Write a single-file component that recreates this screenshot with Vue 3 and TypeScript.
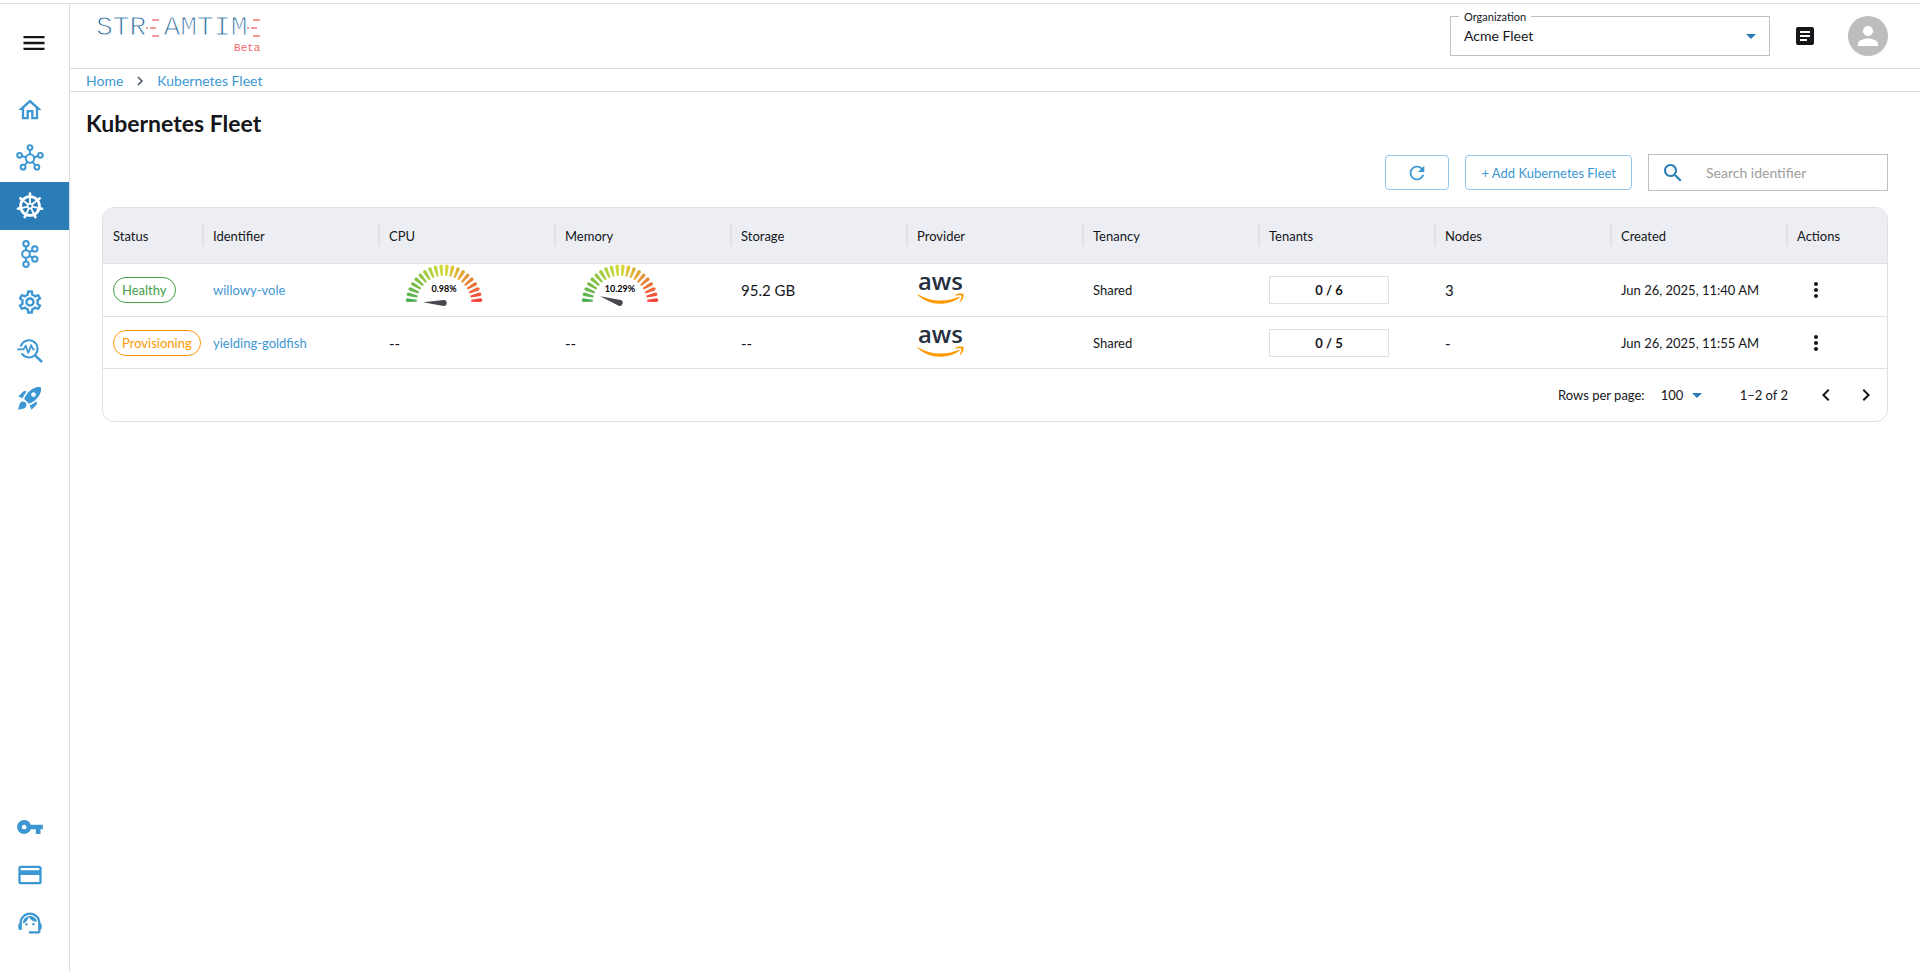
<script setup lang="ts">
import { ref, computed } from 'vue'

interface Fleet {
  status: 'Healthy' | 'Provisioning'
  identifier: string
  cpu: number | null
  memory: number | null
  storage: string
  tenancy: string
  tenants: string
  nodes: string
  created: string
}

const columns = ['Status', 'Identifier', 'CPU', 'Memory', 'Storage', 'Provider', 'Tenancy', 'Tenants', 'Nodes', 'Created', 'Actions']

const fleets: Fleet[] = [
  { status: 'Healthy', identifier: 'willowy-vole', cpu: 0.98, memory: 10.29, storage: '95.2 GB', tenancy: 'Shared', tenants: '0 / 6', nodes: '3', created: 'Jun 26, 2025, 11:40 AM' },
  { status: 'Provisioning', identifier: 'yielding-goldfish', cpu: null, memory: null, storage: '--', tenancy: 'Shared', tenants: '0 / 5', nodes: '-', created: 'Jun 26, 2025, 11:55 AM' },
]

const search = ref('')
const rows = computed(() => fleets.filter(f => f.identifier.includes(search.value.trim())))

const organization = ref('Acme Fleet')
const pageSize = ref('100')

const stops = [[76, 175, 80], [214, 220, 60], [244, 67, 54]]

function mix(t: number): string {
  const i = t < 0.5 ? 0 : 1
  const k = t * 2 - i
  return `rgb(${stops[i].map((c, n) => Math.round(c + (stops[i + 1][n] - c) * k)).join(',')})`
}

const levels = 20
const ticks = Array.from({ length: levels }, (_, i) => ({
  color: mix(i / (levels - 1)),
  turn: `rotate(${(i + 0.5) * (180 / levels)} 55 39)`,
}))

const needle = (value: number) => `rotate(${value * 1.8} 55 39)`

const spokes = Array.from({ length: 7 }, (_, i) => `rotate(${(i * 360) / 7} 14 14)`)
</script>

<template>
  <div class="shell">
    <nav class="sidebar" aria-label="Main">
      <button class="menu" type="button" aria-label="Toggle menu">
        <svg viewBox="0 0 24 24"><path d="M3 18h18v-2H3v2zm0-5h18v-2H3v2zm0-7v2h18V6H3z" /></svg>
      </button>
      <div class="group">
        <a href="#home" aria-label="Home">
          <svg viewBox="0 0 24 24"><path d="M12 5.69l5 4.5V18h-2v-6H9v6H7v-7.81l5-4.5M12 3L2 12h3v8h6v-6h2v6h6v-8h3L12 3z" /></svg>
        </a>
        <a href="#clusters" aria-label="Clusters">
          <svg viewBox="0 0 28 28" class="line">
            <circle cx="14" cy="14.5" r="4.2" />
            <circle cx="14" cy="3.6" r="2.4" /><circle cx="3.6" cy="11.3" r="2.4" /><circle cx="24.4" cy="11.3" r="2.4" />
            <circle cx="7.1" cy="23.2" r="2.4" /><circle cx="20.9" cy="23.2" r="2.4" />
            <path d="M14 6v4.3M5.9 12l4 1.3M22.1 12l-4 1.3M8.6 21.3l2.8-3.5M19.4 21.3l-2.8-3.5" />
          </svg>
        </a>
        <a href="#kubernetes" class="active" aria-label="Kubernetes Fleet" aria-current="page">
          <svg viewBox="0 0 28 28" class="line">
            <circle cx="14" cy="14" r="9.4" stroke-width="2.8" />
            <circle cx="14" cy="14" r="2.4" stroke-width="1.6" />
            <g v-for="s in spokes" :key="s" :transform="s">
              <path d="M14 11.6V1.6" stroke-width="1.8" /><path d="M14 3V1.6" stroke-width="2.6" stroke-linecap="round" />
            </g>
          </svg>
        </a>
        <a href="#kafka" aria-label="Kafka">
          <svg viewBox="0 0 28 28" class="line">
            <circle cx="10" cy="14" r="3.8" />
            <circle cx="10" cy="3.7" r="2.7" /><circle cx="10" cy="24.3" r="2.7" />
            <circle cx="18.8" cy="8.9" r="2.7" /><circle cx="18.8" cy="19.1" r="2.7" />
            <path d="M10 6.4v3.8M10 17.8v3.8M13.3 12.1l3.1-1.8M13.3 15.9l3.1 1.8" />
          </svg>
        </a>
        <a href="#settings" aria-label="Settings">
          <svg viewBox="0 0 24 24"><path d="M19.43 12.98c.04-.32.07-.64.07-.98 0-.34-.03-.66-.07-.98l2.11-1.65c.19-.15.24-.42.12-.64l-2-3.46c-.09-.16-.26-.25-.44-.25-.06 0-.12.01-.17.03l-2.49 1c-.52-.4-1.08-.73-1.69-.98l-.38-2.65C14.46 2.18 14.25 2 14 2h-4c-.25 0-.46.18-.49.42l-.38 2.65c-.61.25-1.17.59-1.69.98l-2.49-1c-.06-.02-.12-.03-.18-.03-.17 0-.34.09-.43.25l-2 3.46c-.13.22-.07.49.12.64l2.11 1.65c-.04.32-.07.65-.07.98 0 .33.03.66.07.98l-2.11 1.65c-.19.15-.24.42-.12.64l2 3.46c.09.16.26.25.44.25.06 0 .12-.01.17-.03l2.49-1c.52.4 1.08.73 1.69.98l.38 2.65c.03.24.24.42.49.42h4c.25 0 .46-.18.49-.42l.38-2.65c.61-.25 1.17-.59 1.69-.98l2.49 1c.06.02.12.03.18.03.17 0 .34-.09.43-.25l2-3.46c.12-.22.07-.49-.12-.64l-2.11-1.65zm-1.98-1.71c.04.31.05.52.05.73 0 .21-.02.43-.05.73l-.14 1.13.89.7 1.08.84-.7 1.21-1.27-.51-1.04-.42-.9.68c-.43.32-.84.56-1.25.73l-1.06.43-.16 1.13-.2 1.35h-1.4l-.19-1.35-.16-1.13-1.06-.43c-.43-.18-.83-.41-1.23-.71l-.91-.7-1.06.43-1.27.51-.7-1.21 1.08-.84.89-.7-.14-1.13c-.03-.31-.05-.54-.05-.74s.02-.43.05-.73l.14-1.13-.89-.7-1.08-.84.7-1.21 1.27.51 1.04.42.9-.68c.43-.32.84-.56 1.25-.73l1.06-.43.16-1.13.2-1.35h1.39l.19 1.35.16 1.13 1.06.43c.43.18.83.41 1.23.71l.91.7 1.06-.43 1.27-.51.7 1.21-1.07.85-.89.7.14 1.13zM12 8c-2.21 0-4 1.79-4 4s1.79 4 4 4 4-1.79 4-4-1.79-4-4-4zm0 6c-1.1 0-2-.9-2-2s.9-2 2-2 2 .9 2 2-.9 2-2 2z" /></svg>
        </a>
        <a href="#insights" aria-label="Insights">
          <svg viewBox="0 0 28 28" class="line">
            <path d="M4.7 10.5A8.6 8.6 0 1 1 5.6 17.2" />
            <path d="M19 19.4l7 6.6" stroke-width="2.6" />
            <path d="M1.2 13.4h6.3l2.2-3.8 2.6 7.4 2.8-7.8 2 4.2h1.6" stroke-width="1.8" stroke-linejoin="round" />
          </svg>
        </a>
        <a href="#deploy" aria-label="Deployments">
          <svg viewBox="0 0 24 24"><path d="M9.19 6.35c-2.04 2.29-3.44 5.58-3.57 5.89L2 10.69l4.05-4.05c.47-.47 1.15-.68 1.81-.55l1.33.26zM11.17 17s3.74-1.55 5.89-3.7c5.4-5.4 4.5-9.62 4.21-10.57-.95-.3-5.17-1.19-10.57 4.21C8.55 9.09 7 12.83 7 12.83L11.17 17zm6.48-2.19c-2.29 2.04-5.58 3.44-5.89 3.57L13.31 22l4.05-4.05c.47-.47.68-1.15.55-1.81l-.26-1.33zM9 18c0 .83-.34 1.58-.88 2.12C6.94 21.3 2 22 2 22s.7-4.94 1.88-6.12C4.42 15.34 5.17 15 6 15c1.66 0 3 1.34 3 3zm4-9c0-1.1.9-2 2-2s2 .9 2 2-.9 2-2 2-2-.9-2-2z" /></svg>
        </a>
      </div>
      <div class="group bottom">
        <a href="#keys" aria-label="API keys">
          <svg viewBox="0 0 24 24"><path d="M12.65 10C11.83 7.67 9.61 6 7 6c-3.31 0-6 2.69-6 6s2.69 6 6 6c2.61 0 4.83-1.67 5.65-4H17v4h4v-4h2v-4H12.65zM7 14c-1.1 0-2-.9-2-2s.9-2 2-2 2 .9 2 2-.9 2-2 2z" /></svg>
        </a>
        <a href="#billing" aria-label="Billing">
          <svg viewBox="0 0 24 24"><path d="M20 4H4c-1.11 0-1.99.89-1.99 2L2 18c0 1.11.89 2 2 2h16c1.11 0 2-.89 2-2V6c0-1.11-.89-2-2-2zm0 14H4v-6h16v6zm0-10H4V6h16v2z" /></svg>
        </a>
        <a href="#support" aria-label="Support">
          <svg viewBox="0 0 24 24"><path d="M21 12.22C21 6.73 16.74 3 12 3c-4.69 0-9 3.65-9 9.28-.6.34-1 .98-1 1.72v2c0 1.1.9 2 2 2h1v-6.1c0-3.87 3.13-7 7-7s7 3.13 7 7V19h-8v2h8c1.1 0 2-.9 2-2v-1.22c.59-.31 1-.92 1-1.64v-2.3c0-.7-.41-1.31-1-1.62z" /><circle cx="9" cy="13" r="1" /><circle cx="15" cy="13" r="1" /><path d="M18 11.03C17.52 8.18 15.04 6 12.05 6c-3.03 0-6.29 2.51-6.03 6.45 2.47-1.01 4.33-3.21 4.86-5.89 1.31 2.63 4 4.44 7.12 4.47z" /></svg>
        </a>
      </div>
    </nav>

    <div class="page">
      <header class="topbar">
        <a class="brand" href="#home" aria-label="Streamtime Beta">
          <span class="wordmark">
            <span>STR</span>
            <svg viewBox="0 0 17 18"><path d="M6 1h7M0 9h2M4 9h6M6 17h7" /></svg>
            <span>AMTIM</span>
            <svg viewBox="0 0 17 18"><path d="M6 1h7M0 9h2M4 9h6M6 17h7" /></svg>
          </span>
          <span class="beta">Beta</span>
        </a>
        <div class="tools">
          <div class="org">
            <label for="org">Organization</label>
            <select id="org" v-model="organization"><option>Acme Fleet</option></select>
            <svg viewBox="0 0 24 24"><path d="M7 10l5 5 5-5z" /></svg>
          </div>
          <button class="docs" type="button" aria-label="Documentation">
            <svg viewBox="0 0 24 24"><path d="M19 3H5c-1.1 0-2 .9-2 2v14c0 1.1.9 2 2 2h14c1.1 0 2-.9 2-2V5c0-1.1-.9-2-2-2zm-5 14H7v-2h7v2zm3-4H7v-2h10v2zm0-4H7V7h10v2z" /></svg>
          </button>
          <button class="avatar" type="button" aria-label="Account">
            <svg viewBox="0 0 24 24"><path d="M12 12c2.21 0 4-1.79 4-4s-1.79-4-4-4-4 1.79-4 4 1.79 4 4 4zm0 2c-2.67 0-8 1.34-8 4v2h16v-2c0-2.66-5.33-4-8-4z" /></svg>
          </button>
        </div>
      </header>

      <nav class="crumbs" aria-label="Breadcrumb">
        <a href="#home">Home</a>
        <svg viewBox="0 0 24 24"><path d="M10 6L8.590 7.410 13.170 12l-4.580 4.590L10 18l6-6z" /></svg>
        <a href="#kubernetes">Kubernetes Fleet</a>
      </nav>

      <main>
        <h1>Kubernetes Fleet</h1>
        <div class="toolbar">
          <button class="outlined refresh" type="button" aria-label="Refresh">
            <svg viewBox="0 0 24 24"><path d="M17.65 6.35C16.2 4.9 14.21 4 12 4c-4.42 0-7.99 3.58-7.99 8s3.57 8 7.99 8c3.73 0 6.84-2.55 7.73-6h-2.08c-.82 2.33-3.04 4-5.65 4-3.31 0-6-2.69-6-6s2.69-6 6-6c1.66 0 3.14.69 4.22 1.78L13 11h7V4l-2.35 2.35z" /></svg>
          </button>
          <button class="outlined add" type="button">+ Add Kubernetes Fleet</button>
          <label class="search">
            <svg viewBox="0 0 24 24"><path d="M15.5 14h-.79l-.28-.27C15.41 12.59 16 11.11 16 9.500 16 5.910 13.090 3 9.500 3S3 5.910 3 9.500 5.910 16 9.500 16c1.610 0 3.090-.59 4.230-1.570l.27.28v.79l5 4.990L20.490 19l-4.990-5zm-6 0C7.010 14 5 11.990 5 9.500S7.010 5 9.500 5 14 7.010 14 9.500 11.990 14 9.500 14z" /></svg>
            <input v-model="search" type="text" placeholder="Search identifier" aria-label="Search identifier" />
          </label>
        </div>

        <section class="card">
          <table>
            <colgroup>
              <col v-for="c in columns" :key="c" :class="{ narrow: c === 'Status' || c === 'Actions' }" />
            </colgroup>
            <thead>
              <tr><th v-for="c in columns" :key="c" scope="col">{{ c }}</th></tr>
            </thead>
            <tbody>
              <tr v-for="row in rows" :key="row.identifier">
                <td><span class="chip" :class="row.status.toLowerCase()">{{ row.status }}</span></td>
                <td><a :href="'#' + row.identifier">{{ row.identifier }}</a></td>
                <td v-for="(v, i) in [row.cpu, row.memory]" :key="i" class="large">
                  <svg v-if="v !== null" class="gauge" viewBox="0 0 110 52">
                    <path v-for="t in ticks" :key="t.turn" d="M18 37.200 L27.500 38 Q28.200 39 27.500 40 L18 40.800 Q15 39 18 37.200z" :fill="t.color" :transform="t.turn" />
                    <path d="M34 39L54.600 35.900A3.100 3.100 0 1 1 54.600 42.100z" class="needle" :transform="needle(v)" />
                    <text x="55" y="28">{{ v }}%</text>
                  </svg>
                  <template v-else>--</template>
                </td>
                <td class="large">{{ row.storage }}</td>
                <td>
                  <svg class="aws" viewBox="0 0 304 182" role="img" aria-label="AWS">
                    <text x="6" y="92">aws</text>
                    <path d="M273.5,143.7c-32.9,24.3-80.7,37.2-121.8,37.2c-57.6,0-109.5-21.3-148.7-56.7c-3.1-2.8-0.3-6.6,3.4-4.4c42.4,24.6,94.7,39.5,148.800,39.5c36.5,0,76.6-7.6,113.5-23.200C274.2,133.6,278.9,139.7,273.5,143.7z" />
                    <path d="M287.2,128.1c-4.2-5.4-27.8-2.6-38.5-1.300c-3.2,0.4-3.7-2.4-0.8-4.5c18.8-13.2,49.7-9.4,53.300-5c3.6,4.5-1,35.4-18.6,50.200c-2.7,2.3-5.3,1.1-4.1-1.900C282.5,155.7,291.4,133.4,287.2,128.1z" />
                  </svg>
                </td>
                <td>{{ row.tenancy }}</td>
                <td><div class="tenants">{{ row.tenants }}</div></td>
                <td class="large">{{ row.nodes }}</td>
                <td>{{ row.created }}</td>
                <td>
                  <button class="more" type="button" :aria-label="'Actions for ' + row.identifier">
                    <svg viewBox="0 0 24 24"><path d="M12 8c1.1 0 2-.9 2-2s-.9-2-2-2-2 .9-2 2 .9 2 2 2zm0 2c-1.1 0-2 .9-2 2s.9 2 2 2 2-.9 2-2-.9-2-2-2zm0 6c-1.1 0-2 .9-2 2s.9 2 2 2 2-.9 2-2-.9-2-2-2z" /></svg>
                  </button>
                </td>
              </tr>
            </tbody>
          </table>
          <footer>
            <label for="size">Rows per page:</label>
            <div class="size">
              <select id="size" v-model="pageSize"><option>100</option></select>
              <svg viewBox="0 0 24 24"><path d="M7 10l5 5 5-5z" /></svg>
            </div>
            <span class="range">1–2 of 2</span>
            <button type="button" aria-label="Previous page">
              <svg viewBox="0 0 24 24"><path d="M15.410 7.410L14 6l-6 6 6 6 1.410-1.410L10.830 12z" /></svg>
            </button>
            <button type="button" aria-label="Next page">
              <svg viewBox="0 0 24 24"><path d="M10 6L8.590 7.410 13.170 12l-4.580 4.590L10 18l6-6z" /></svg>
            </button>
          </footer>
        </section>
      </main>
    </div>
  </div>
</template>

<style>
body {
  margin: 0;
  background: #fff;
}
</style>

<style scoped>
* {
  box-sizing: border-box;
}
.shell {
  display: flex;
  min-height: 100vh;
  border-top: 3px solid #fff;
  color: #15161a;
  font: 13px/20px Lato, "Noto Sans", sans-serif;
}
button {
  padding: 0;
  border: 0;
  background: none;
  color: inherit;
  font: inherit;
  cursor: pointer;
}
a {
  color: #3d97d3;
  text-decoration: none;
}
svg {
  display: block;
  flex: none;
  width: 24px;
  height: 24px;
  fill: currentColor;
}
select {
  appearance: none;
  border: 0;
  background: none;
  color: inherit;
  font: inherit;
}

.sidebar {
  display: flex;
  flex: none;
  flex-direction: column;
  width: 70px;
  border-top: 1px solid #dfe0e6;
  border-right: 1px solid #d9dae6;
}
.sidebar svg {
  width: 28px;
  height: 28px;
}
.menu {
  padding: 25px 20px;
  height: 82px;
}
.menu svg {
  margin-bottom: 4px;
}
.group a {
  display: flex;
  align-items: center;
  height: 48px;
  padding-left: 16px;
}
.group a.active {
  background: #2a7db7;
  color: #fff;
}
.bottom {
  margin-top: auto;
  padding-bottom: 24px;
}
.sidebar .line {
  fill: none;
  stroke: currentColor;
  stroke-width: 2;
}

.page {
  flex: 1;
  min-width: 0;
  border-top: 1px solid #dfe0e6;
}
.topbar {
  display: flex;
  justify-content: space-between;
  height: 65px;
  padding: 12px 32px 0 26px;
  border-bottom: 1px solid #d9dae6;
}
.brand {
  display: flex;
  flex-direction: column;
  align-items: flex-end;
}
.wordmark {
  display: flex;
  align-items: center;
  height: 23px;
  color: #2c6c9e;
  font: 28px/22px "Liberation Mono", monospace;
  -webkit-text-stroke: 1px #fff;
}
.wordmark svg {
  width: 17px;
  height: 18px;
  fill: none;
  stroke: #f59a9a;
  stroke-width: 2;
}
.beta {
  margin-right: 4px;
  color: #ee6b6e;
  font: 11px/18px "Liberation Mono", monospace;
}
.tools {
  display: flex;
  align-items: flex-start;
}
.org {
  position: relative;
  width: 320px;
}
.org label {
  position: absolute;
  top: -7px;
  left: 9px;
  padding: 0 5px;
  background: #fff;
  font-size: 11px;
  line-height: 16px;
}
.org select {
  width: 100%;
  height: 40px;
  padding: 0 32px 0 13px;
  border: 1px solid #bfbfbf;
  font-size: 14px;
}
.org svg {
  position: absolute;
  top: 8px;
  right: 7px;
  color: #2a7db7;
  pointer-events: none;
}
.docs {
  padding: 8px;
  margin: 0 23px 0 15px;
}
.docs,
.avatar {
  height: 40px;
}
.avatar {
  width: 40px;
  padding: 5px;
  border-radius: 50%;
  background: #bdbdbd;
  color: #fff;
}
.avatar svg {
  width: 30px;
  height: 30px;
}

.crumbs {
  display: flex;
  align-items: center;
  gap: 8px;
  height: 23px;
  padding: 1px 16px 0;
  border-bottom: 1px solid #d9dae6;
  font-size: 14px;
}
.crumbs svg {
  width: 18px;
  height: 18px;
  color: #4a5568;
}
main {
  padding: 15px 32px 32px;
}
h1 {
  margin: 0 -16px 15px;
  font-size: 23px;
  font-weight: 700;
  line-height: 32px;
}
.toolbar {
  display: flex;
  align-items: center;
  justify-content: flex-end;
  gap: 16px;
  margin-bottom: 16px;
}
.outlined {
  display: flex;
  align-items: center;
  justify-content: center;
  height: 35px;
  border: 1px solid #96c7ea;
  border-radius: 4px;
  color: #3d97d3;
}
.refresh {
  width: 64px;
}
.refresh svg {
  width: 22px;
  height: 22px;
}
.add {
  padding: 0 15px;
}
.search {
  display: flex;
  align-items: center;
  width: 240px;
  height: 37px;
  padding: 0 12px;
  border: 1px solid #bfbfbf;
  color: #2a7db7;
}
.search input {
  flex: 1;
  min-width: 0;
  margin-left: 21px;
  padding: 0;
  border: 0;
  outline: 0;
  background: none;
  color: #15161a;
  font: inherit;
  font-size: 14px;
}
.search input::placeholder {
  color: #9e9e9e;
}

.card {
  border: 1px solid #e0e0e0;
  border-radius: 12px;
  overflow: hidden;
}
table {
  width: 100%;
  table-layout: fixed;
  border-spacing: 0;
}
.narrow {
  width: 100px;
}
th,
td {
  height: 52px;
  padding: 0 10px;
  border-bottom: 1px solid #e0e0e0;
  text-align: left;
  white-space: nowrap;
}
th {
  position: relative;
  height: 56px;
  background: #edeef3;
  font-weight: 400;
}
th:not(:last-child)::after {
  content: "";
  position: absolute;
  z-index: 1;
  top: 16px;
  right: -1px;
  width: 2px;
  height: 22px;
  background: #e2e2e6;
}
.large {
  font-size: 15px;
}
.chip {
  display: inline-block;
  padding: 0 8px;
  border: 1px solid;
  border-radius: 13px;
  line-height: 24px;
}
.healthy {
  color: #43a047;
}
.provisioning {
  color: #ff9800;
}
.gauge {
  width: 110px;
  height: 52px;
}
.gauge text {
  fill: #000;
  font-size: 9px;
  font-weight: 700;
  text-anchor: middle;
}
.needle {
  fill: #464a4f;
}
.aws {
  width: 47px;
  height: 28px;
  fill: #ff9900;
  overflow: visible;
}
.aws text {
  fill: #252f3e;
  font: 600 155px "Open Sans", sans-serif;
}
.tenants {
  width: 120px;
  border: 1px solid #e0e0e0;
  font-weight: 700;
  line-height: 26px;
  text-align: center;
}
.more {
  display: block;
  padding: 4px 7px;
}
footer {
  display: flex;
  align-items: center;
  justify-content: flex-end;
  height: 52px;
  padding-right: 1px;
}
.size {
  position: relative;
  margin: 0 31px 0 16px;
}
.size select {
  display: block;
  width: 48px;
  padding: 0 24px 0 0;
}
.size svg {
  position: absolute;
  top: -2px;
  right: 0;
  color: #2a7db7;
  pointer-events: none;
}
.range {
  margin-right: 18px;
}
footer button {
  padding: 8px;
}
</style>
